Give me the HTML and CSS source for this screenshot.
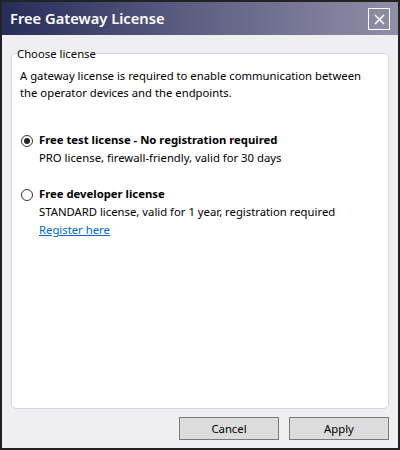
FILE: index.html
```html
<!DOCTYPE html>
<html>
<head>
<meta charset="utf-8">
<link rel="stylesheet" href="styles.css">
</head>
<body>
<div class="window">
  <div class="titlebar">
    <span class="title">Free Gateway License</span>
    <button class="close" aria-label="Close">
      <svg width="11" height="11" viewBox="0 0 11 11"><path d="M1 1L10 10M10 1L1 10" stroke="#fff" stroke-width="1.6"/></svg>
    </button>
  </div>
  <div class="body">
    <fieldset class="group">
      <legend>Choose license</legend>
      <p class="intro">A gateway license is required to enable communication between the operator devices and the endpoints.</p>
      <div class="option">
        <span class="radio checked"></span>
        <div class="opt-text">
          <div class="opt-title">Free test license - No registration required</div>
          <div class="opt-desc">PRO license, firewall-friendly, valid for 30 days</div>
        </div>
      </div>
      <div class="option">
        <span class="radio"></span>
        <div class="opt-text">
          <div class="opt-title">Free developer license</div>
          <div class="opt-desc">STANDARD license, valid for 1 year, registration required</div>
          <a class="link" href="#">Register here</a>
        </div>
      </div>
    </fieldset>
    <div class="buttons">
      <button class="btn">Cancel</button>
      <button class="btn">Apply</button>
    </div>
  </div>
</div>
</body>
</html>
```

FILE: styles.css
```css
html, body {
  margin: 0;
  padding: 0;
  background: #222;
}
body {
  font-family: "Noto Sans", "Open Sans", sans-serif;
  font-size: 11.3px;
  color: #000;
}
.window {
  width: 396px;
  height: 446px;
  margin: 2px;
  background: #efeff2;
  display: flex;
  flex-direction: column;
}
.titlebar {
  height: 33px;
  background: linear-gradient(to right, #262d58 0%, #5a5c80 45%, #908ea8 100%);
  display: flex;
  align-items: center;
  justify-content: space-between;
  padding: 0 8px 0 8px;
}
.title {
  color: #fff;
  font-size: 14.7px;
  font-weight: 600;
  margin-top: -1px;
}
.close {
  width: 22px;
  height: 22px;
  border: 1px solid #fff;
  background: transparent;
  padding: 0;
  display: flex;
  align-items: center;
  justify-content: center;
  margin-top: 1px;
}
.body {
  flex: 1;
  display: flex;
  flex-direction: column;
  padding: 11px 9px 8px 9px;
}
.group {
  flex: 1;
  margin: 0;
  background: #fff;
  border: 1px solid #d5d3dc;
  border-radius: 5px;
  padding: 2px 8px 0 8px;
}
.group legend {
  padding: 0;
  margin-left: -3px;
  font-size: 11.3px;
  background: linear-gradient(to bottom, #efeff2 50%, #fff 50%);
}
.intro {
  margin: 4px 0 0 0;
  line-height: 17px;
}
.option {
  display: flex;
  margin-top: 30px;
}
.option + .option {
  margin-top: 18px;
}
.radio {
  border: 1px solid #333;
  border-radius: 50%;
  margin: 4px 6px 0 1px;
  flex: none;
  box-sizing: border-box;
  width: 12px;
  height: 12px;
  position: relative;
}
.radio.checked::after {
  content: "";
  position: absolute;
  left: 2px;
  top: 2px;
  width: 6px;
  height: 6px;
  border-radius: 50%;
  background: #222;
}
.opt-text {
  line-height: 18px;
}
.opt-title {
  font-weight: bold;
}
.link {
  color: #0066cc;
  text-decoration: underline;
}
.buttons {
  display: flex;
  justify-content: flex-end;
  gap: 10px;
  padding-top: 8px;
}
.btn {
  width: 100px;
  height: 23px;
  background: #dcdcdc;
  border: 1px solid #7a7a7a;
  font-family: inherit;
  font-size: 11.3px;
  padding: 0;
  color: #000;
}
```
